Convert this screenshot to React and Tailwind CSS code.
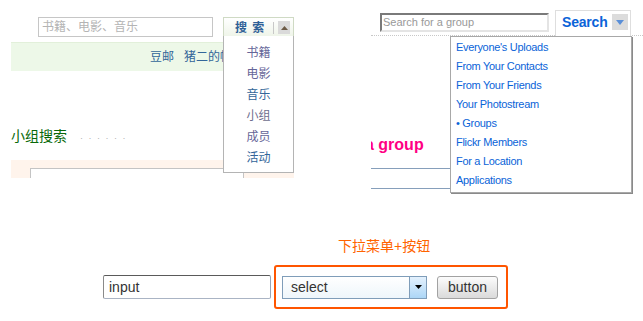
import React from "react";

const CJK = "font-['Liberation_Sans','Noto_Sans_CJK_SC',sans-serif]";

function LeftPanel() {
  const items = [
    ["书籍", "text-[#666699]"],
    ["电影", "text-[#666699]"],
    ["音乐", "text-[#336699]"],
    ["小组", "text-[#6e6e8e]"],
    ["成员", "text-[#666699]"],
    ["活动", "text-[#336699]"],
  ];
  return (
    <div className="relative ml-[11px] w-[283px] h-[178px] overflow-hidden bg-white">
      <div className="flex items-start h-[42px] pt-[17px]">
        <div className="ml-[27px] w-[175px] h-[20px] border border-[#c6c6c6] bg-white flex items-center pl-[3px] text-[12px] text-[#b4b4b4]">
          书籍、电影、音乐
        </div>
        <div className="ml-[10px] w-[71px] h-[20px] border-l border-t border-r border-[#cfdac4] bg-gradient-to-b from-white to-[#eef4e8] flex items-center">
          <span className="ml-[11px] text-[12px] font-bold text-[#2f6096] tracking-[1px] leading-none">搜 索</span>
          <span className="ml-[8px] w-px h-[12px] bg-[#c8c8c8]"></span>
          <span className="ml-[4px] w-[12px] h-[13px] bg-[#dadada] flex items-center justify-center">
            <svg width="7" height="4" viewBox="0 0 7 4"><path d="M0 4 L3.5 0 L7 4 Z" fill="#6b5a45" /></svg>
          </span>
        </div>
      </div>
      <div className="h-[29px] bg-[#edf8e8] border-t border-[#e2f0da] flex items-center">
        <span className="ml-[139px] text-[12px] text-[#336699] whitespace-nowrap">豆邮&nbsp;&nbsp;&nbsp;猪二的帐号</span>
      </div>
      <div className="mt-[55px] h-[20px] flex items-center">
        <span className="text-[14px] leading-[20px] text-[#086808]">小组搜索</span>
        <span className="ml-[13px] mt-[4px] text-[9px] text-[#b0b0b0] tracking-[5.5px] leading-none">······</span>
      </div>
      <div className="mt-[14px] h-[18px] bg-[#fff4ec] pt-[8px]">
        <div className="ml-[19px] w-[214px] h-[10px] bg-white border-l border-t border-r border-[#c4c4c4]"></div>
      </div>
      <div className="absolute left-[212px] top-[36px] w-[71px] h-[137px] bg-white border border-t-0 border-[#b4b4b4] pt-[7px] flex flex-col items-center">
        {items.map(([t, c]) => (
          <div key={t} className={`text-[12px] leading-[21px] ${c}`}>{t}</div>
        ))}
      </div>
    </div>
  );
}

function RightPanel() {
  const items = [
    "Everyone's Uploads",
    "From Your Contacts",
    "From Your Friends",
    "Your Photostream",
    "• Groups",
    "Flickr Members",
    "For a Location",
    "Applications",
  ];
  return (
    <div className="relative ml-[77px] w-[272px] h-[200px] overflow-hidden bg-white font-['Liberation_Sans',Arial,sans-serif]">
      <div className="relative h-[36px] flex items-start border-b border-dotted border-[#c8c8c8]">
        <div className="ml-[9px] mt-[13px] w-[169px] h-[19px] border-2 border-t-[#7a7a7a] border-l-[#7a7a7a] border-r-[#e4e4e4] border-b-[#e4e4e4] bg-white flex items-center pl-[1px] text-[11px] text-[#999999]">
          Search for a group
        </div>
        <div className="relative z-10 ml-[6px] mt-[10px] w-[76px] h-[27px] bg-white border-l border-t border-r border-[#dedede] flex items-start">
          <span className="ml-[6px] mt-[3px] text-[14px] font-bold leading-[16px] tracking-[-0.2px] text-[#0a63d8]">Search</span>
          <span className="ml-auto mr-[2px] mt-[3px] w-[16px] h-[16px] bg-[#dcdcdc] flex items-center justify-center">
            <svg width="8" height="5" viewBox="0 0 8 5"><path d="M0 0 L8 0 L4 5 Z" fill="#5a8fd8" /></svg>
          </span>
        </div>
      </div>
      <div className="mt-[100px] -ml-[6px] h-[18px] text-[16px] font-bold leading-[18px] text-[#ff0084] whitespace-nowrap">a group</div>
      <div className="mt-[14px] w-[80px] h-px bg-[#869fbb]"></div>
      <div className="mt-[19px] w-[80px] h-px bg-[#869fbb]"></div>
      <div className="absolute left-[79px] top-[36px] w-[182px] h-[157px] bg-white border border-[#a8a8a8] shadow-[1px_1px_0_#8a8a8a] pt-[1px] pl-[5px] z-20">
        {items.map((t) => (
          <div key={t} className="text-[11px] leading-[19px] tracking-[-0.3px] text-[#0a63d8] whitespace-nowrap">{t}</div>
        ))}
      </div>
    </div>
  );
}

export default function App() {
  return (
    <div className={`w-[643px] h-[321px] bg-white overflow-hidden ${CJK}`}>
      <div className="flex h-[200px]">
        <LeftPanel />
        <RightPanel />
      </div>
      <div className="mt-[36px] pl-[338px] h-[20px] text-[14px] leading-[20px] text-[#ff6400]">下拉菜单+按钮</div>
      <div className="mt-[9px] flex items-center">
        <div className="ml-[103px] w-[168px] h-[24px] rounded-[2px] border border-t-[#5a5a5a] border-l-[#8a8a8a] border-r-[#9aa4b4] border-b-[#aab4c4] bg-white flex items-center pl-[5px] text-[14px] text-[#333333] font-['Liberation_Sans',Arial,sans-serif]">
          input
        </div>
        <div className="ml-[3px] w-[234px] h-[44px] border-2 border-[#ff5500] rounded-[3px] flex items-center pl-[6px]">
          <div className="w-[145px] h-[23px] border border-[#7f9db9] bg-gradient-to-b from-white to-[#eef6fb] flex items-stretch font-['Liberation_Sans',Arial,sans-serif]">
            <div className="flex-1 flex items-center pl-[8px] text-[14px] text-[#333333]">select</div>
            <div className="w-[17px] border-l border-[#7f9db9] bg-gradient-to-b from-[#e4f1fd] to-[#acd6f6] flex items-center justify-center">
              <svg width="7" height="4" viewBox="0 0 7 4"><path d="M0 0 L7 0 L3.5 4 Z" fill="#000" /></svg>
            </div>
          </div>
          <div className="ml-[10px] w-[61px] h-[23px] rounded-[3px] border border-[#a2a2a2] bg-gradient-to-b from-[#fcfcfc] to-[#dadada] flex items-center justify-center text-[14px] text-[#333333] font-['Liberation_Sans',Arial,sans-serif]">
            button
          </div>
        </div>
      </div>
    </div>
  );
}
